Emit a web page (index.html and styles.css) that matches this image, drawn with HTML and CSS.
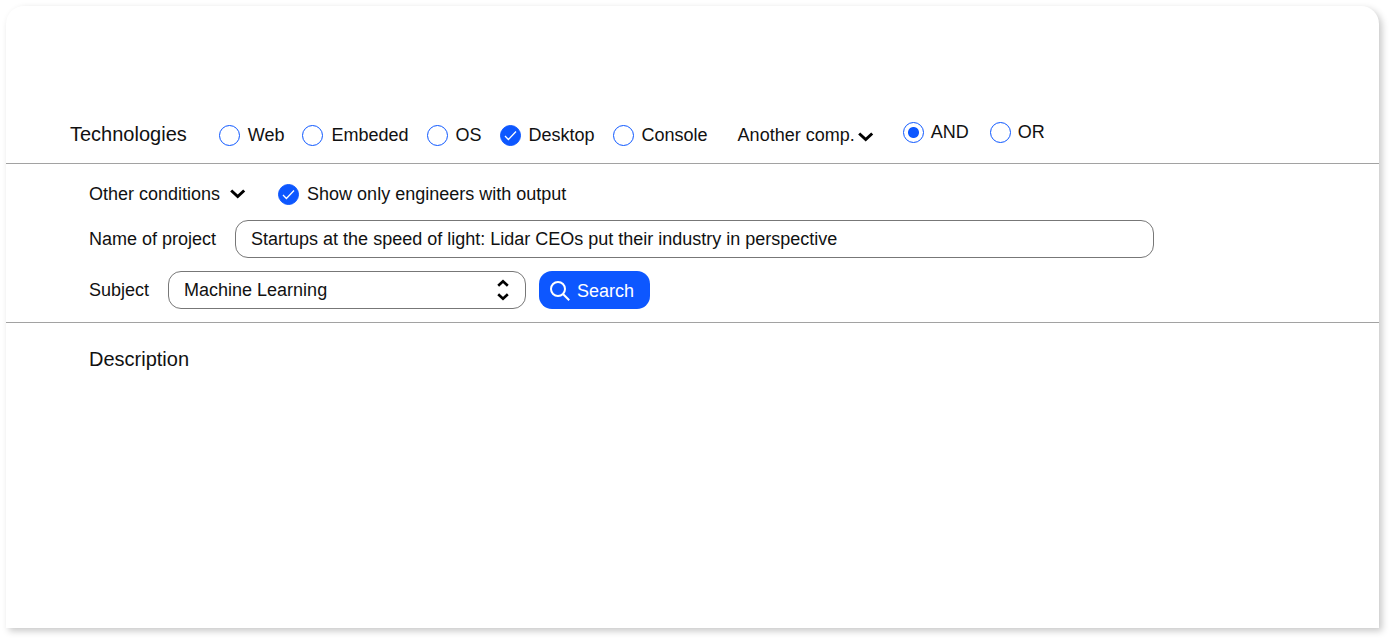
FILE: index.html
```html
<!DOCTYPE html>
<html lang="en">
<head>
<meta charset="utf-8">
<meta name="viewport" content="width=device-width, initial-scale=1">
<title>Project search</title>
<link rel="stylesheet" href="styles.css">
</head>
<body>
<main class="panel">
  <form>
    <section class="technologies">
      <h2 class="heading">Technologies</h2>
      <div class="checks">
        <label class="option"><span class="mark"><input type="checkbox" name="tech"><svg class="tick" viewBox="0 0 21 21"><path d="M5 11l3.4 3.5L16 6.5"/></svg></span>Web</label>
        <label class="option"><span class="mark"><input type="checkbox" name="tech"><svg class="tick" viewBox="0 0 21 21"><path d="M5 11l3.4 3.5L16 6.5"/></svg></span>Embeded</label>
        <label class="option"><span class="mark"><input type="checkbox" name="tech"><svg class="tick" viewBox="0 0 21 21"><path d="M5 11l3.4 3.5L16 6.5"/></svg></span>OS</label>
        <label class="option"><span class="mark"><input type="checkbox" name="tech" checked><svg class="tick" viewBox="0 0 21 21"><path d="M5 11l3.4 3.5L16 6.5"/></svg></span>Desktop</label>
        <label class="option"><span class="mark"><input type="checkbox" name="tech"><svg class="tick" viewBox="0 0 21 21"><path d="M5 11l3.4 3.5L16 6.5"/></svg></span>Console</label>
      </div>
      <button type="button" class="expander">Another comp.<svg class="chevron low" viewBox="0 0 16 10"><path d="M1.200 1.500l6.500 6 6.500-6"/></svg></button>
      <div class="radios">
        <label class="option"><span class="mark"><input type="radio" name="logic" checked></span>AND</label>
        <label class="option"><span class="mark"><input type="radio" name="logic"></span>OR</label>
      </div>
    </section>
    <section class="conditions">
      <div class="row toggles">
        <button type="button" class="expander spaced">Other conditions<svg class="chevron" viewBox="0 0 16 10"><path d="M1.200 1.500l6.500 6 6.500-6"/></svg></button>
        <label class="option"><span class="mark"><input type="checkbox" checked><svg class="tick" viewBox="0 0 21 21"><path d="M5 11l3.4 3.5L16 6.5"/></svg></span>Show only engineers with output</label>
      </div>
      <div class="row project">
        <label for="project">Name of project</label>
        <input class="field" id="project" type="text" value="Startups at the speed of light: Lidar CEOs put their industry in perspective">
      </div>
      <div class="row subject">
        <label for="subject">Subject</label>
        <div class="picker">
          <select class="field" id="subject"><option>Machine Learning</option></select>
          <svg class="arrows" viewBox="0 0 12 22"><path d="M1.2 6.8L6 2.200l4.800 4.600M1.200 15.200L6 19.800l4.800-4.600"/></svg>
        </div>
        <button type="submit" class="search"><svg class="glass" viewBox="0 0 20 20"><circle cx="8" cy="8" r="7"/><path d="M13 13l6.200 6.200"/></svg>Search</button>
      </div>
    </section>
  </form>
  <section class="description">
    <h2 class="heading">Description</h2>
  </section>
</main>
</body>
</html>
```
FILE: styles.css
```css
* {
  box-sizing: border-box;
}

body {
  margin: 0;
  padding: 6px 12px 12px 6px;
  min-height: 100vh;
  display: flex;
  background: #fff;
  color: #111;
  font: 18px/22px "Liberation Sans", Arial, sans-serif;
}

button,
input,
select {
  margin: 0;
  font: inherit;
  color: inherit;
}

.panel {
  flex: 1;
  min-width: 0;
  padding-top: 107px;
  border-radius: 18px 18px 0 0;
  background: #fff;
  box-shadow: 3px 3px 7px rgba(0, 0, 0, 0.22);
}

.heading {
  margin: 0;
  font-size: 20px;
  font-weight: 400;
  line-height: 22px;
}

.technologies {
  display: flex;
  flex-wrap: wrap;
  align-items: center;
  padding: 8px 64px 16px;
  border-bottom: 1px solid #a2a2a2;
}

.checks {
  display: flex;
  flex-wrap: wrap;
  gap: 18px;
  margin: 2px 30px 0 32px;
}

.radios {
  display: flex;
  gap: 21px;
  margin: 0 0 4px 29px;
}

.option {
  display: flex;
  align-items: center;
  gap: 8px;
}

.radios .option {
  gap: 7px;
}

.mark {
  display: grid;
  width: 21px;
  height: 21px;
}

.mark > * {
  grid-area: 1 / 1;
}

.mark input {
  appearance: none;
  width: 21px;
  height: 21px;
  border: 1px solid #0d57ff;
  border-radius: 50%;
  background: #fff;
}

.mark input[type="checkbox"]:checked {
  background: #0d57ff;
}

.mark input[type="radio"]:checked {
  background: radial-gradient(circle, #0d57ff 5px, #fff 6px);
}

.tick {
  visibility: hidden;
  pointer-events: none;
  fill: none;
  stroke: #fff;
  stroke-width: 1.3;
}

.mark input:checked + .tick {
  visibility: visible;
}

.expander {
  display: flex;
  align-items: center;
  gap: 3px;
  padding: 0;
  border: 0;
  background: none;
}

.technologies .expander {
  margin-top: 2px;
}

.expander.spaced {
  gap: 10px;
}

.chevron {
  width: 16px;
  height: 10px;
  fill: none;
  stroke: #000;
  stroke-width: 3;
}

.chevron.low {
  margin-top: 3px;
}

.conditions {
  padding: 19px 83px 13px;
  border-bottom: 1px solid #a2a2a2;
}

.row {
  display: flex;
  align-items: center;
}

.toggles {
  gap: 32px;
  margin-bottom: 15px;
}

.project {
  gap: 19px;
  margin-bottom: 13px;
}

.subject {
  gap: 13px;
}

.field {
  width: 100%;
  height: 38px;
  padding: 0 15px;
  border: 1px solid #777;
  border-radius: 13px;
  background: #fff;
}

.project .field {
  flex: 1;
  min-width: 0;
  max-width: 919px;
}

.picker {
  display: grid;
  align-items: center;
  flex: 0 1 358px;
  margin-left: 6px;
}

.picker > * {
  grid-area: 1 / 1;
}

.picker .field {
  appearance: none;
}

.arrows {
  width: 12px;
  height: 22px;
  margin-right: 17px;
  justify-self: end;
  pointer-events: none;
  fill: none;
  stroke: #000;
  stroke-width: 2.6;
}

.search {
  display: flex;
  align-items: center;
  gap: 7px;
  height: 38px;
  padding: 2px 16px 0 11px;
  border: 0;
  border-radius: 13px;
  background: #0d57ff;
  color: #fff;
}

.glass {
  width: 20px;
  height: 20px;
  fill: none;
  stroke: #fff;
  stroke-width: 2;
}

.description {
  padding: 25px 83px;
}
```
